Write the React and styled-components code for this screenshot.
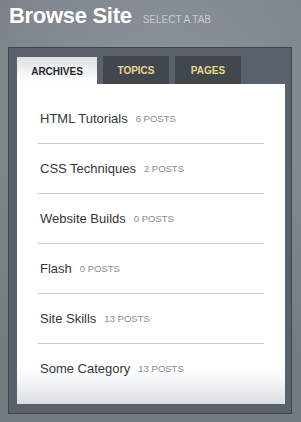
import React from 'react';
import styled, { createGlobalStyle } from 'styled-components';

const GlobalStyle = createGlobalStyle`
  html, body {
    margin: 0;
    padding: 0;
  }
  body {
    width: 301px;
    height: 422px;
    overflow: hidden;
    font-family: "Liberation Sans", Arial, sans-serif;
    background: radial-gradient(ellipse 90% 70% at 55% 25%, #8e969b 0%, #80888d 55%, #737b81 100%);
  }
`;

const Page = styled.div`
  padding: 5px 8px 0 8px;
`;

const Header = styled.header`
  display: flex;
  align-items: baseline;
  gap: 11px;
  height: 42px;
  padding-left: 1px;
`;

const Title = styled.h1`
  margin: 0;
  font-size: 22px;
  font-weight: bold;
  letter-spacing: -0.3px;
  color: #fff;
  line-height: 22px;
`;

const Subtitle = styled.span`
  font-size: 10px;
  color: #c6cbce;
  text-transform: uppercase;
`;

const Panel = styled.section`
  width: 284px;
  height: 367px;
  box-sizing: border-box;
  background: #59626b;
  border: 1px solid #3e454b;
  padding: 8px 8px 0 8px;
`;

const TabBar = styled.nav`
  display: flex;
  gap: 6px;
  height: 28px;
`;

const Tab = styled.div`
  display: flex;
  align-items: center;
  justify-content: center;
  box-sizing: border-box;
  width: ${p => (p.$active ? 80 : 66)}px;
  height: 28px;
  margin-top: ${p => (p.$active ? 1 : 0)}px;
  font-size: 10px;
  font-weight: bold;
  text-transform: uppercase;
  color: ${p => (p.$active ? '#25282b' : '#e8d78f')};
  background: ${p => (p.$active ? 'linear-gradient(#dce0e3, #ffffff 90%)' : '#42474e')};
`;

const Content = styled.div`
  width: 268px;
  height: 320px;
  box-sizing: border-box;
  padding: 10px 21px 0 21px;
  background: linear-gradient(#ffffff 0%, #ffffff 89%, #e9ecee 96%, #dadee1 100%);
`;

const List = styled.ul`
  list-style: none;
  margin: 0;
  padding: 0;
`;

const Item = styled.li`
  display: flex;
  align-items: center;
  gap: 8px;
  height: 49px;
  padding-left: 2px;
  border-bottom: ${p => (p.$last ? 'none' : '1px solid #c9c9c9')};
`;

const Name = styled.span`
  font-size: 13px;
  color: #343638;
`;

const Count = styled.span`
  font-size: 9.5px;
  color: #868b90;
  text-transform: uppercase;
`;

const categories = [
  ['HTML Tutorials', 6],
  ['CSS Techniques', 2],
  ['Website Builds', 0],
  ['Flash', 0],
  ['Site Skills', 13],
  ['Some Category', 13],
];

const App = () => (
  <>
    <GlobalStyle />
    <Page>
      <Header>
        <Title>Browse Site</Title>
        <Subtitle>Select a tab</Subtitle>
      </Header>
      <Panel>
        <TabBar>
          <Tab $active>Archives</Tab>
          <Tab>Topics</Tab>
          <Tab>Pages</Tab>
        </TabBar>
        <Content>
          <List>
            {categories.map(([name, count], i) => (
              <Item key={name} $last={i === categories.length - 1}>
                <Name>{name}</Name>
                <Count>{count} posts</Count>
              </Item>
            ))}
          </List>
        </Content>
      </Panel>
    </Page>
  </>
);

export default App;
